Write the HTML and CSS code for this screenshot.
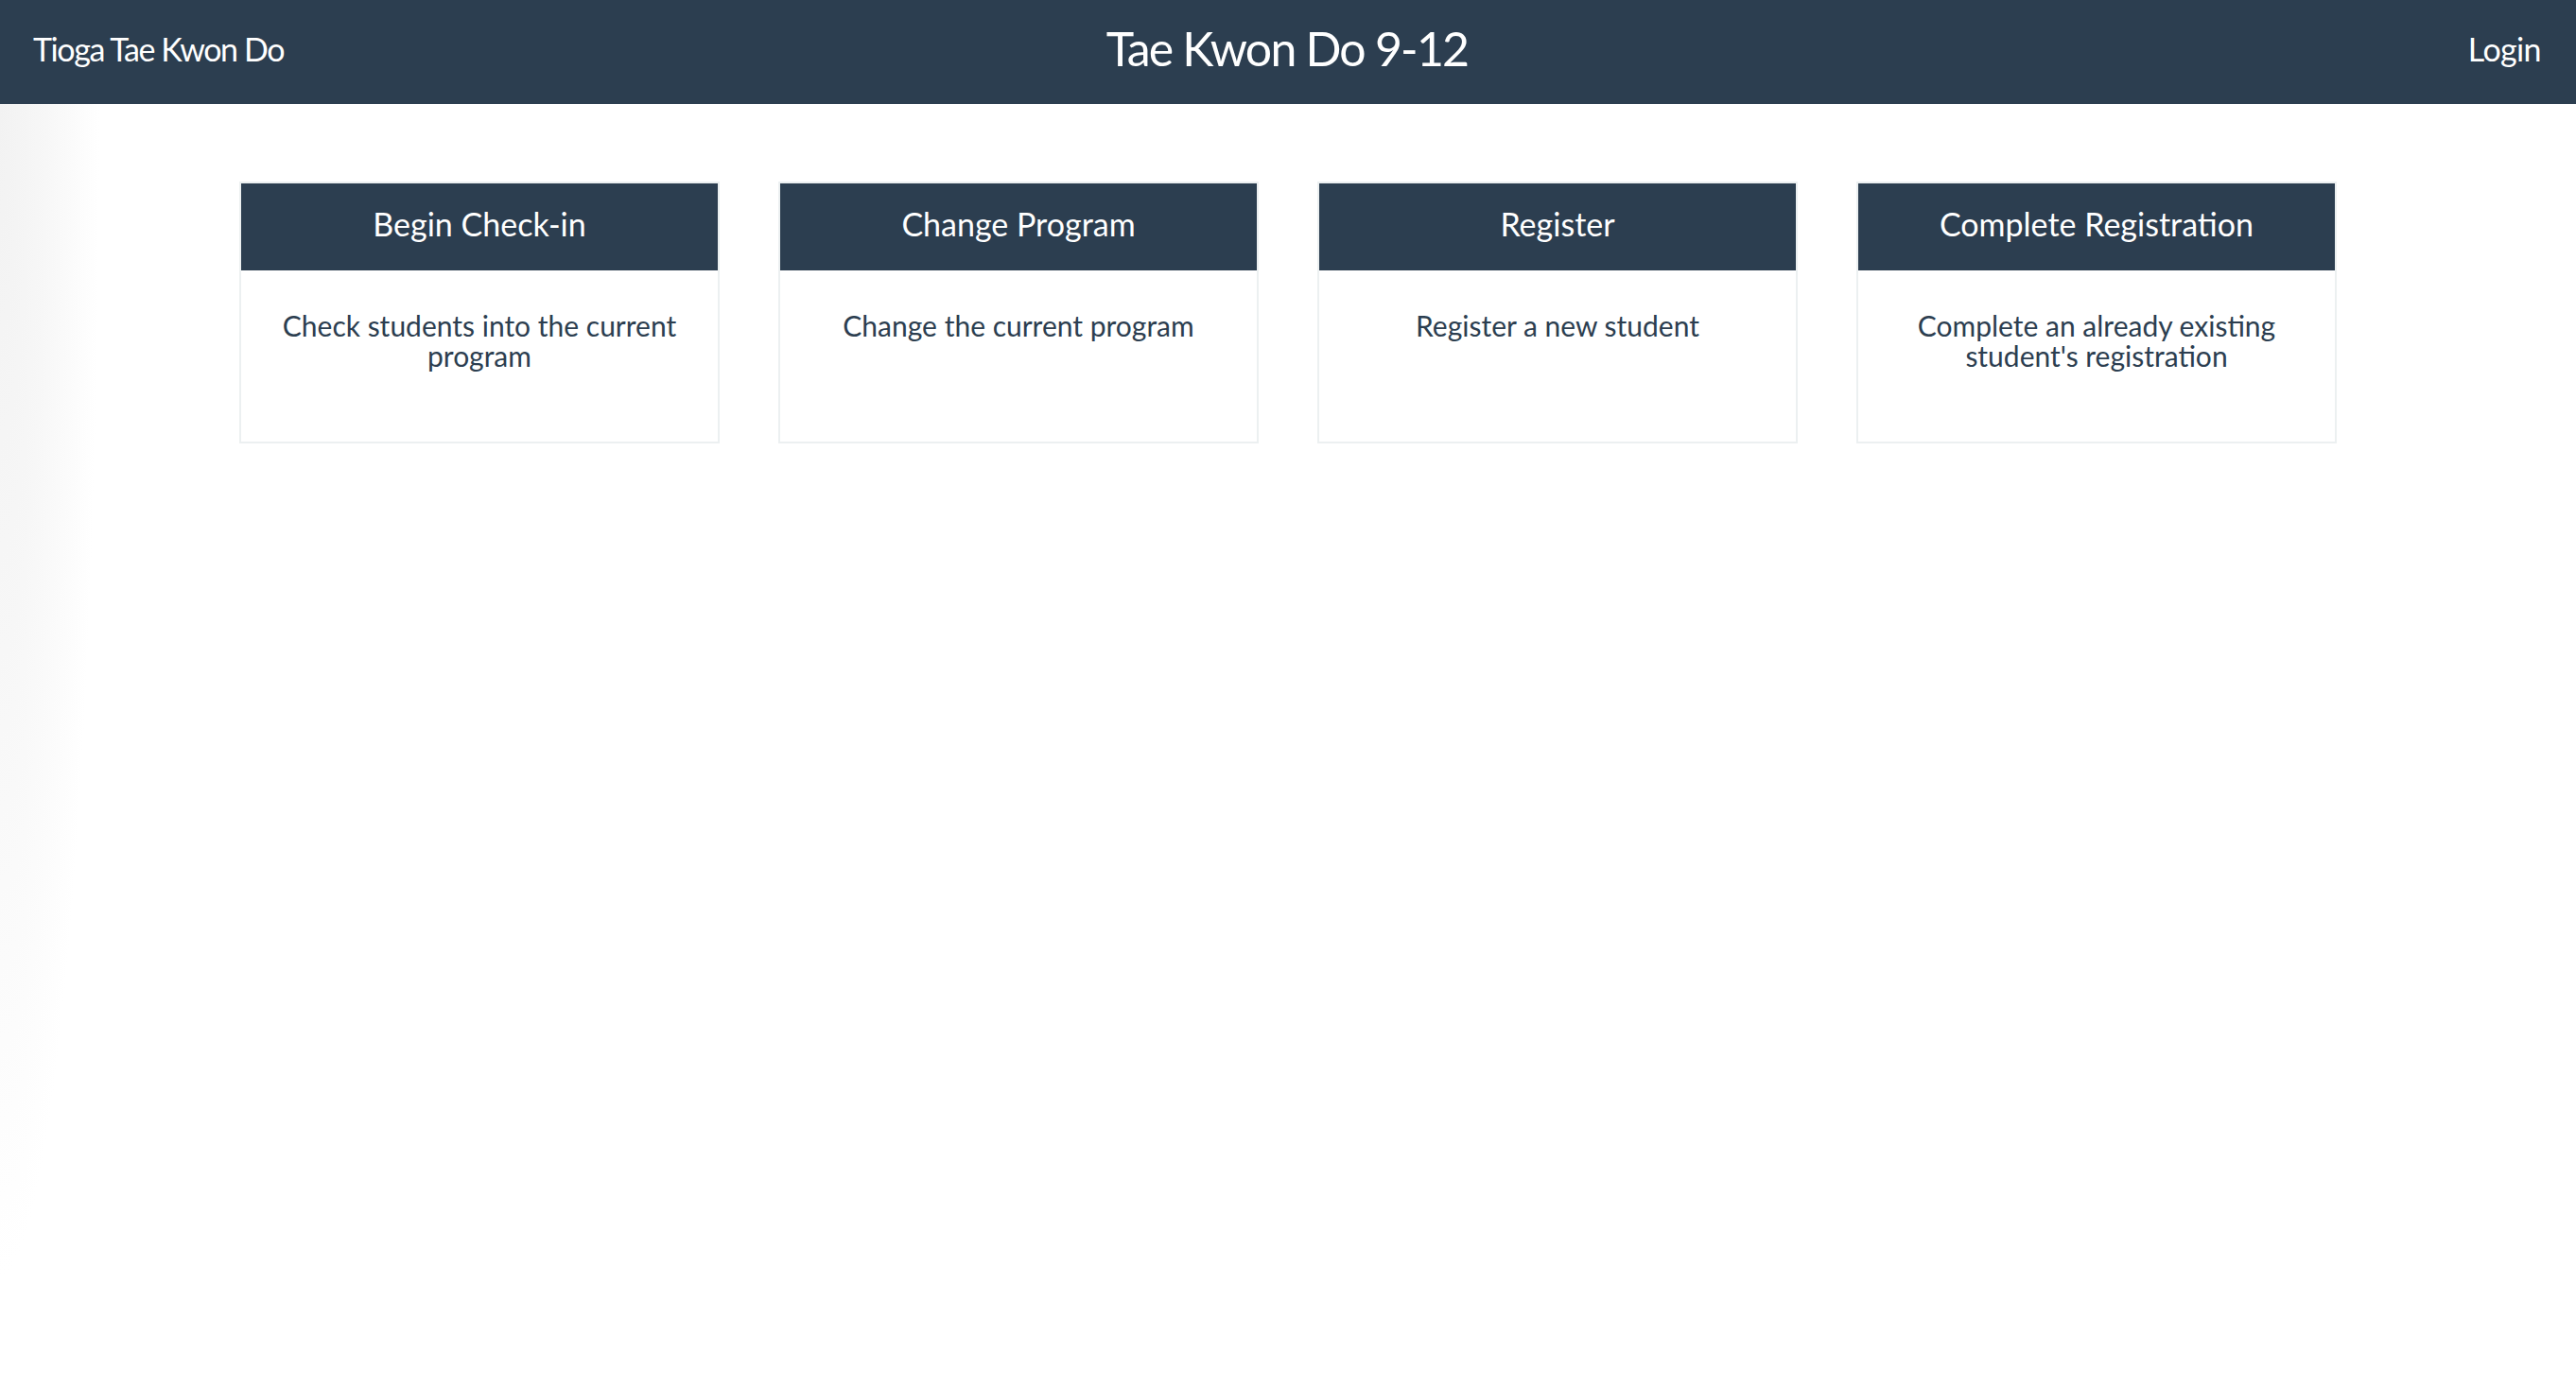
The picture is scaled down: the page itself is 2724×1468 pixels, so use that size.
FILE: index.html
```html
<!DOCTYPE html>
<html>
<head>
    <meta charset="utf-8">
    <link rel="stylesheet" href="styles.css">
    <title>Tae Kwon Do 9-12</title>
</head>
<body>
    <div class="navbar">
        <a href="#" class="brand">Tioga Tae Kwon Do</a>
        <div class="page-title">Tae Kwon Do 9-12</div>
        <a href="#" class="login">Login</a>
    </div>

    <div class="main">
        <div class="actions">
            <a href="#" class="action-card">
                <div class="action-title">Begin Check-in</div>
                <div class="action-text">Check students into the current program</div>
            </a>
            <a href="#" class="action-card">
                <div class="action-title">Change Program</div>
                <div class="action-text">Change the current program</div>
            </a>
            <a href="#" class="action-card">
                <div class="action-title">Register</div>
                <div class="action-text">Register a new student</div>
            </a>
            <a href="#" class="action-card">
                <div class="action-title">Complete Registration</div>
                <div class="action-text">Complete an already existing student's registration</div>
            </a>
        </div>
    </div>
</body>
</html>
```

FILE: styles.css
```css
html, body {
    height: 100%;
}

body {
    margin: 0;
    padding: 0;
    background-color: #ffffff;
    color: #2c3e50;
    font-family: Lato, "Open Sans", "Liberation Sans", sans-serif;
    display: flex;
    flex-direction: column;
    overflow: hidden;
}

/* Top bar */
.navbar {
    height: 110px;
    box-sizing: border-box;
    background-color: #2c3e50;
    display: grid;
    grid-template-columns: 1fr auto 1fr;
    align-items: center;
    padding: 0 37px 8px 35px;
}

.brand {
    color: #ffffff;
    font-size: 34px;
    letter-spacing: -1.4px;
    text-decoration: none;
    justify-self: start;
}

.page-title {
    color: #ffffff;
    font-size: 50px;
    letter-spacing: -1.8px;
}

.login {
    color: #ffffff;
    font-size: 34px;
    letter-spacing: -0.6px;
    text-decoration: none;
    justify-self: end;
}

/* Page area, with the faint shade on the left edge */
.main {
    flex: 1;
    background: radial-gradient(ellipse 105px 1240px at 0 0, #f2f2f2 0%, rgba(244, 244, 244, 0.75) 45%, rgba(255, 255, 255, 0) 100%);
}

.actions {
    width: 2218px;
    margin: 82px auto 0;
    display: grid;
    grid-template-columns: repeat(4, 1fr);
    gap: 62px;
}

.action-card {
    display: flex;
    flex-direction: column;
    border: 2px solid #ecf0f1;
    text-decoration: none;
    color: #2c3e50;
}

.action-title {
    height: 92px;
    box-sizing: border-box;
    padding-bottom: 7px;
    background-color: #2c3e50;
    color: #ffffff;
    font-size: 34px;
    display: flex;
    align-items: center;
    justify-content: center;
}

.action-text {
    height: 181px;
    box-sizing: border-box;
    padding: 42px 20px 0;
    font-size: 30px;
    line-height: 32px;
    text-align: center;
}
```
